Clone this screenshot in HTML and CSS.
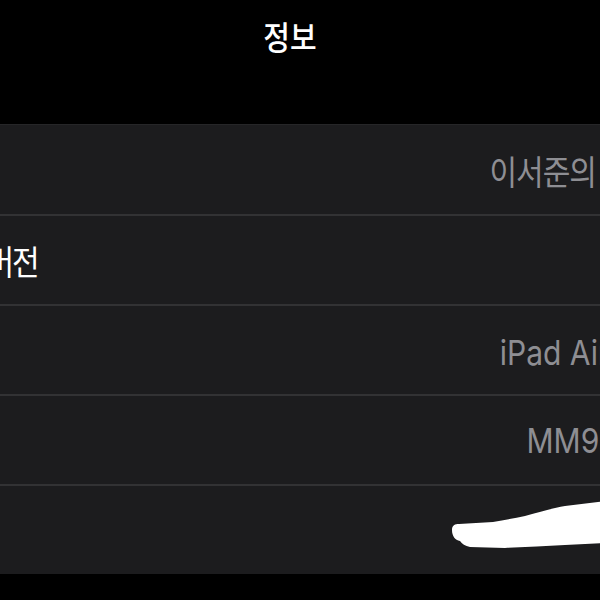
FILE: index.html
```html
<!DOCTYPE html>
<html lang="ko">
<head>
    <meta charset="UTF-8">
    <meta name="viewport" content="width=device-width, initial-scale=1.0">
    <title>정보</title>
    <link rel="stylesheet" href="styles.css">
</head>
<body>
    <div class="pane">
        <header class="nav">
            <h1 class="title"><span>정보</span></h1>
        </header>

        <!-- About list -->
        <ul class="group">
            <li class="row">
                <span class="label">이름</span>
                <span class="value-wrap">
                    <span class="value ko">이서준의 iPad</span>
                    <svg class="chevron" viewBox="0 0 10 18" width="10" height="18">
                        <path d="M1.5 1.5 L8.5 9 L1.5 16.5" fill="none" stroke="#5a5a5f" stroke-width="2.4" stroke-linecap="round" stroke-linejoin="round"/>
                    </svg>
                </span>
            </li>
            <li class="row">
                <span class="label">소프트웨어 버전</span>
                <span class="value">16.1</span>
            </li>
            <li class="row">
                <span class="label">모델 이름</span>
                <span class="value">iPad Air (5세대)</span>
            </li>
            <li class="row">
                <span class="label">모델 번호</span>
                <span class="value">MM9C3KH/A</span>
            </li>
            <li class="row">
                <span class="label">일련 번호</span>
                <span class="value"></span>
            </li>
        </ul>
    </div>

    <!-- scribbled-out serial number -->
    <svg class="redact" viewBox="0 0 160 60" width="160" height="60">
        <path d="M7 35 C7 30 10 29 14 29 L48 27 C60 25 70 23 80 21 C95 17 108 13 120 11 L160 6 L160 48 L120 50 C100 51 80 52 60 53 L25 52 C20 51 17 49 15 46 C10 45 7 41 7 35 Z" fill="#fff"/>
    </svg>
</body>
</html>
```

FILE: styles.css
```css
body {
    margin: 0;
    padding: 0;
    background-color: #000;
    color: #fff;
    font-family: Inter, "Noto Sans CJK KR", sans-serif;
    overflow: hidden;
    position: relative;
    width: 600px;
    height: 600px;
}
.pane {
    width: 960px;
    margin-left: -190px;
}
.nav {
    height: 124px;
    box-sizing: border-box;
    padding-top: 24px;
    text-align: center;
}
.title {
    margin: 0;
    font-size: 29px;
    font-weight: 500;
    line-height: 1;
}
.title span,
.label,
.value {
    display: inline-block;
    transform: scaleY(1.14);
}
.group {
    list-style: none;
    margin: 0;
    padding: 0;
    background-color: #1c1c1e;
}
.row {
    display: flex;
    align-items: center;
    justify-content: space-between;
    height: 88px;
    padding: 0 57px 0 42px;
    border-top: 2px solid #323234;
    font-size: 30px;
    white-space: nowrap;
}
.row:first-child {
    height: 89px;
    border-top: 1px solid #262628;
}
.label {
    color: #fff;
    letter-spacing: -2px;
}
.value {
    color: #8e8e93;
}
.value.ko {
    letter-spacing: -1px;
}
.value-wrap {
    display: flex;
    align-items: center;
    gap: 42px;
}
.redact {
    position: absolute;
    left: 445px;
    top: 495px;
}
```
